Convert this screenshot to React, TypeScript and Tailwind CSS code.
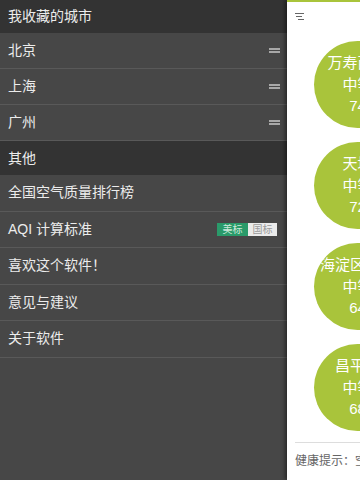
import React from "react";

const font = { fontFamily: '"Liberation Sans", "Noto Sans CJK SC", sans-serif' };

const cities = ["北京", "上海", "广州"];
const others = ["全国空气质量排行榜", "AQI 计算标准", "喜欢这个软件！", "意见与建议", "关于软件"];
const stations = [
  { name: "万寿西宫", level: "中等", aqi: 74 },
  { name: "天坛", level: "中等", aqi: 72 },
  { name: "海淀区万柳", level: "中等", aqi: 64 },
  { name: "昌平镇", level: "中等", aqi: 68 },
];

const DragHandle = () => (
  <svg width="11" height="5" viewBox="0 0 11 5">
    <rect x="0" y="0" width="11" height="2" fill="#a8a8a8" />
    <rect x="0" y="3" width="11" height="2" fill="#a8a8a8" />
  </svg>
);

const Header = ({ label, h }: { label: string; h: string }) => (
  <div className={`${h} flex items-center bg-[#333333] px-2 text-[14px] text-[#ececec]`}>{label}</div>
);

export default function App() {
  return (
    <div className="flex h-[480px] w-[360px] overflow-hidden bg-[#474747]" style={font}>
      <div className="flex w-[287px] shrink-0 flex-col">
        <Header label="我收藏的城市" h="h-[33px]" />
        {cities.map((c) => (
          <div
            key={c}
            className="flex h-[36px] items-center justify-between border-b border-[#595959] pl-2 pr-[7px] text-[14px] text-[#ececec]"
          >
            <span>{c}</span>
            <DragHandle />
          </div>
        ))}
        <Header label="其他" h="h-[34px]" />
        {others.map((o) => (
          <div
            key={o}
            className="flex h-[36.5px] items-center justify-between border-b border-[#595959] pl-2 pr-[10px] text-[14px] text-[#ececec]"
          >
            <span>{o}</span>
            {o.startsWith("AQI") && (
              <div className="flex h-[13px] text-[10px] leading-[13px]">
                <span className="w-[31px] bg-[#2a9a6a] text-center text-[#cfe9dc]">美标</span>
                <span className="w-[29px] bg-[#ebebeb] text-center text-[#9a9a9a]">国标</span>
              </div>
            )}
          </div>
        ))}
      </div>
      <div className="relative flex w-[340px] shrink-0 flex-col bg-white shadow-[-2px_0_4px_rgba(0,0,0,0.45)]">
        <div className="h-[2px] bg-[#a9c43b]" />
        <div className="flex h-[39px] items-start pl-2 pt-[10px]">
          <svg width="10" height="9" viewBox="0 0 10 9">
            <path d="M0 1.5h9M1 4.5h6M3 7.5h6" stroke="#666" strokeWidth="1" />
          </svg>
        </div>
        <div className="flex flex-col gap-[14px] pl-[27px]">
          {stations.map((s) => (
            <div
              key={s.name}
              className="flex h-[87px] w-[87px] flex-col items-center justify-center rounded-full bg-[#a9c43b] text-[15px] text-white"
            >
              <span className="leading-[22px] whitespace-nowrap">{s.name}</span>
              <span className="leading-[21px]">{s.level}</span>
              <span className="leading-[22px]">{s.aqi}</span>
            </div>
          ))}
        </div>
        <div className="ml-2 mt-[11px] border-t border-[#dddddd] pt-[9px] text-[12px] whitespace-nowrap text-[#666666]">
          健康提示：空气质量可接受
        </div>
      </div>
    </div>
  );
}
